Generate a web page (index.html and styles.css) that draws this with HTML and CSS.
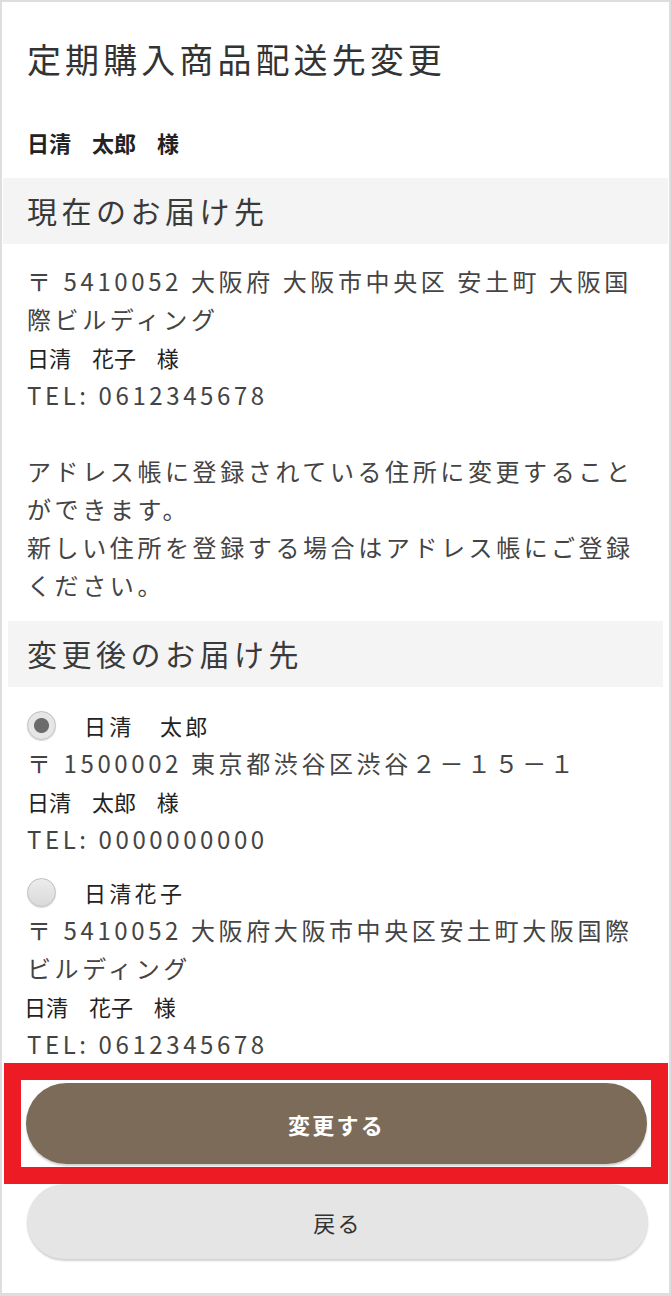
FILE: index.html
```html
<!DOCTYPE html>
<html lang="ja">
<head>
    <meta charset="UTF-8">
    <meta name="viewport" content="width=device-width, initial-scale=1.0">
    <title>定期購入商品配送先変更</title>
    <link rel="stylesheet" href="styles.css">
</head>
<body>
    <div class="page">
        <h1 class="title">定期購入商品配送先変更</h1>
        <p class="customer">日清 太郎 様</p>

        <h2 class="band band-wide">現在のお届け先</h2>
        <div class="section">
            <p class="address">〒 5410052 大阪府 大阪市中央区 安土町 大阪国際ビルディング</p>
            <p class="name">日清 花子 様</p>
            <p class="tel">TEL: 0612345678</p>
            <p class="note">アドレス帳に登録されている住所に変更することができます。<br>新しい住所を登録する場合はアドレス帳にご登録ください。</p>
        </div>

        <h2 class="band band-inset">変更後のお届け先</h2>
        <div class="options">
            <div class="option">
                <label class="option-head">
                    <input type="radio" name="addr" checked>
                    <span>日清　太郎</span>
                </label>
                <p class="address">〒 1500002 東京都渋谷区渋谷２－１５－１</p>
                <p class="name">日清 太郎 様</p>
                <p class="tel">TEL: 0000000000</p>
            </div>
            <div class="option">
                <label class="option-head">
                    <input type="radio" name="addr">
                    <span>日清花子</span>
                </label>
                <p class="address">〒 5410052 大阪府大阪市中央区安土町大阪国際ビルディング</p>
                <p class="name name-shift">日清 花子 様</p>
                <p class="tel">TEL: 0612345678</p>
            </div>
        </div>

        <div class="highlight">
            <button class="btn btn-submit">変更する</button>
        </div>
        <button class="btn btn-back">戻る</button>
    </div>
</body>
</html>
```

FILE: styles.css
```css
* {
    margin: 0;
    padding: 0;
    box-sizing: border-box;
}

body {
    font-family: "Noto Sans CJK JP", "Noto Sans", sans-serif;
    color: #444444;
    background-color: #ffffff;
}

.page {
    width: 671px;
    min-height: 1296px;
    border: 2px solid #dedede;
    border-bottom-width: 3px;
}

.title {
    padding: 32px 25px 0;
    font-size: 34px;
    font-weight: normal;
    line-height: 50px;
    letter-spacing: 0.12em;
    color: #333333;
}

.customer {
    margin-top: 39px;
    margin-bottom: 17px;
    padding: 0 25px;
    font-size: 22px;
    font-weight: bold;
    line-height: 38px;
    word-spacing: 16px;
    color: #222222;
}

.band {
    height: 66px;
    background-color: #f4f4f4;
    font-size: 30px;
    font-weight: normal;
    line-height: 64px;
    letter-spacing: 0.15em;
    color: #3a3a3a;
}

.band-wide {
    margin: 0 1px;
    padding: 0 24px;
}

.band-inset {
    margin: 0 6px;
    padding: 0 19px;
}

.section {
    padding: 18px 25px 17px;
}

.address,
.tel,
.note,
.option-head {
    font-size: 24px;
    line-height: 38px;
    letter-spacing: 0.15em;
}

.name {
    font-size: 22px;
    line-height: 38px;
    word-spacing: 16px;
    color: #222222;
}

.name-shift {
    margin-left: -3px;
}

.note {
    margin-top: 38px;
}

.options {
    padding: 19px 25px 0;
}

.option + .option {
    margin-top: 15px;
}

.option-head {
    display: flex;
    align-items: center;
    gap: 28px;
    height: 38px;
    font-size: 22px;
    color: #222222;
}

.option-head input {
    appearance: none;
    -webkit-appearance: none;
    width: 29px;
    height: 29px;
    border-radius: 50%;
    border: 1px solid #bdbdbd;
    background: linear-gradient(#ececec, #dadada);
    box-shadow: 0 1px 1px rgba(0, 0, 0, 0.15);
}

.option-head input:checked {
    background: radial-gradient(circle, #6b6b6b 0 7px, #e6e6e6 8px);
}

.highlight {
    margin: 0 1px 0 2px;
    padding: 3px 2px 3px 5px;
    border: 17px solid #ed1c24;
    background-color: #ffffff;
}

.btn {
    display: block;
    width: 621px;
    border: none;
    border-radius: 42px;
    font-family: "Noto Sans CJK JP", "Noto Sans", sans-serif;
    font-size: 22px;
    letter-spacing: 0.1em;
    box-shadow: 0 2px 2px rgba(0, 0, 0, 0.18);
}

.btn-submit {
    height: 81px;
    background-color: #7d6b5a;
    color: #ffffff;
    font-weight: bold;
}

.btn-back {
    height: 75px;
    margin-left: 25px;
    background-color: #e5e5e5;
    color: #333333;
    border-radius: 40px;
}
```
